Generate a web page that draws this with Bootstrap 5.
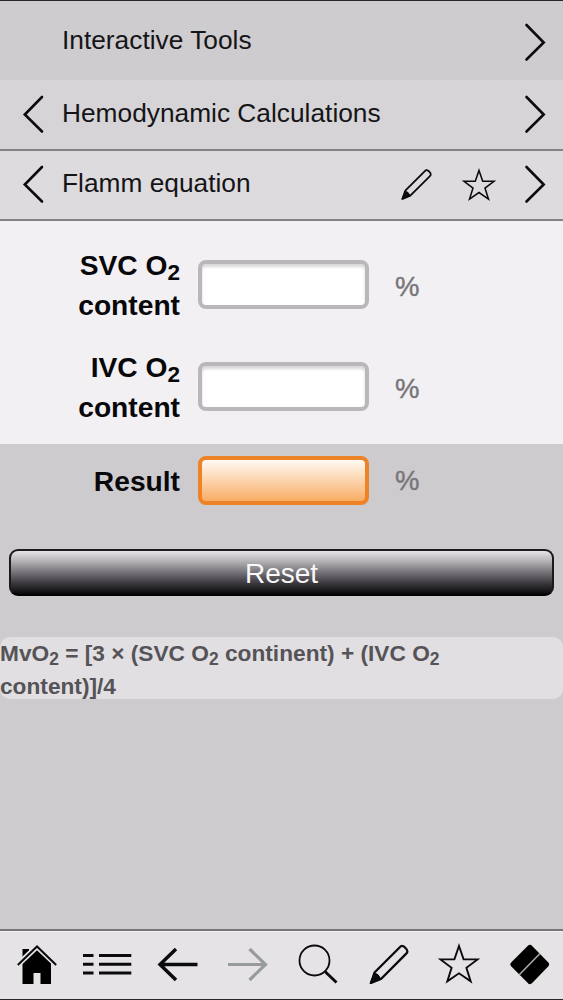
<!DOCTYPE html>
<html lang="en">
<head>
<meta charset="utf-8">
<meta name="viewport" content="width=device-width, initial-scale=1">
<title>Flamm equation</title>
<link rel="stylesheet" href="https://cdn.jsdelivr.net/npm/bootstrap@5.3.0/dist/css/bootstrap.min.css">
<style>
body { font-family: "Liberation Sans", Arial, sans-serif; color: #111; background: #cdcbce; line-height: 1; overflow: hidden; }
svg { display: block; flex: none; fill: none; stroke: #0b0b0d; }
.crumb { font-size: 26.3px; padding: 0 16px 2px 20px; color: #151417; }
.crumb .title { margin-left: 16px; }
.crumb-1 { height: 80px; border-top: 1px solid #2b252d; background: #cecccf; padding-top: 5px; }
.crumb-2 { height: 71px; border-bottom: 2px solid #858287; background: #d6d4d7; }
.crumb-3 { height: 70px; border-bottom: 2px solid #858287; background: #dddbde; }
.crumb a { color: inherit; text-decoration: none; padding-bottom: 1px; }
.crumb-1 a { padding-bottom: 4px; }
.inputs { height: 223px; padding-top: 13px; background: #f2f0f3; }
.entry { height: 102px; }
.entry label { width: 180px; font-weight: 700; font-size: 28.2px; line-height: 40px; color: #08080a; text-align: right; }
.entry sub, .formula sub { font-size: .8em; line-height: 0; bottom: -.23em; }
.entry input.form-control { width: 171px; height: 49px; margin: 0 0 2px 18px; border: 4px solid #b9b7ba; border-radius: 8px; box-shadow: inset 0 3px 3px #d8d8da; background: #fff; }
.entry .unit { margin: 4px 0 0 26px; font-size: 27.5px; color: #777579; -webkit-text-stroke: .4px #777579; }
.entry.outcome { height: 74px; }
.entry.outcome .unit { margin-top: 0; }
.entry.outcome input.form-control { border-color: #ee8226; box-shadow: none; background: linear-gradient(#fffaf5, #f9ad64); }
.btn.reset { width: 545px; height: 47px; margin: 31px auto 0 9px; padding: 0; font-size: 28px; line-height: 45px; color: #f8f8fa; border: 2px solid #1d1a1f; border-bottom-color: #000; border-radius: 9px; background: linear-gradient(#f0eef1 0, #b9b7ba 24%, #747276 50%, #353337 75%, #000 100%); background-origin: border-box; }
.formula { height: 62px; margin-top: 41px; border-radius: 10px; background: #e1dfe2; color: #555357; font-size: 22.7px; line-height: 32.5px; font-weight: 700; }
.formula sub { font-size: .77em; }
.toolbar { height: 71px; border-top: 2px solid #77757a; border-bottom: 1px solid #29252b; background: #e5e3e6; box-shadow: inset 0 1px #f1eff2; }
.crumb .edit { margin-right: 30px; }
.crumb .favorite { margin: 2px 25px 0 0; }
</style>
</head>
<body class="vh-100 d-flex flex-column">
<svg width="0" height="0" class="position-absolute" aria-hidden="true">
  <defs>
    <symbol id="prev" viewBox="0 0 26 40"><path d="M22 3 4.800 20.500 22 37.500" stroke-width="2.600" stroke-linecap="round"/></symbol>
    <symbol id="next" viewBox="0 0 26 40"><path d="M5.500 3 22.700 20.500 5.500 37.500" stroke-width="2.600" stroke-linecap="round"/></symbol>
    <symbol id="pencil" viewBox="0 0 40 40"><path d="M2 38.500 5.500 28 30.800 2.700Q33-.2 36.500 3.500 40 7 37 9.400L12 34.500Z" stroke-width="2.300" stroke-linejoin="round"/><path d="M1 39 5.300 28.500Q9.500 29 11.800 34.500Z" fill="#0b0b0d" stroke="#0b0b0d"/></symbol>
    <symbol id="star" viewBox="0 0 42 42"><path d="M21 3 25.600 16.400H39.500L28.400 24.800 32.700 38.400 21 30.300 9.300 38.400 13.600 24.800 2.500 16.400H16.400Z" stroke-width="1.900"/></symbol>
  </defs>
</svg>

<nav>
  <div class="crumb crumb-1 d-flex align-items-center">
    <svg width="26" height="40"></svg>
    <a class="title flex-grow-1" href="#">Interactive Tools</a>
    <svg width="26" height="40"><use href="#next"/></svg>
  </div>
  <div class="crumb crumb-2 d-flex align-items-center">
    <svg width="26" height="40"><use href="#prev"/></svg>
    <a class="title flex-grow-1" href="#">Hemodynamic Calculations</a>
    <svg width="26" height="40"><use href="#next"/></svg>
  </div>
  <div class="crumb crumb-3 d-flex align-items-center">
    <svg width="26" height="40"><use href="#prev"/></svg>
    <a class="title flex-grow-1" href="#">Flamm equation</a>
    <svg class="edit" width="31" height="31"><use href="#pencil"/></svg>
    <svg class="favorite" width="34" height="34"><use href="#star"/></svg>
    <svg width="26" height="40"><use href="#next"/></svg>
  </div>
</nav>

<main class="d-flex flex-column flex-grow-1">
  <section class="inputs">
    <div class="entry d-flex align-items-center">
      <label for="svc">SVC O<sub>2</sub><br>content</label>
      <input id="svc" class="form-control" type="text">
      <span class="unit">%</span>
    </div>
    <div class="entry d-flex align-items-center">
      <label for="ivc">IVC O<sub>2</sub><br>content</label>
      <input id="ivc" class="form-control" type="text">
      <span class="unit">%</span>
    </div>
  </section>
  <div class="entry outcome d-flex align-items-center">
    <label for="result">Result</label>
    <input id="result" class="form-control" type="text" readonly>
    <span class="unit">%</span>
  </div>
  <button class="btn reset" type="reset">Reset</button>
  <div class="formula">MvO<sub>2</sub> = [3 × (SVC O<sub>2</sub> continent) + (IVC O<sub>2</sub><br>content)]/4</div>
</main>

<footer class="toolbar d-flex align-items-center">
  <svg width="563" height="68" viewBox="0 931 563 68">
    <path d="M22.500 949H29V953L36.500 948 51 960V984H40.500V973H33.500V984H22.500Z" fill="#000" stroke="none"/>
    <path d="M17.500 965 37 946.500 56.500 965" stroke="#e5e3e6" stroke-width="5.500"/>
    <path d="M17.800 965 37 946.500 56.200 965" stroke-width="2"/>
    <path d="M83 955.500H93.500M83 964.200H93.500M83 973H93.500M99 955.500H131.300M99 964.200H131.300M99 973H131.300" stroke-width="3"/>
    <path d="M176 949 160 964.500 176 980M160 964.500H197.500" stroke-width="3.500"/>
    <path d="M249.500 949 265.500 964.500 249.500 980M265.500 964.500H228" stroke="#989b9c" stroke-width="3.200"/>
    <circle cx="314.500" cy="960.500" r="15" stroke-width="1.800"/><path d="M325 971.500 336.500 982.500" stroke-width="3"/>
    <use href="#pencil" x="369" y="944.500" width="40" height="40"/>
    <use href="#star" x="438" y="943" width="42" height="42"/>
    <path d="M530 948 546 964.300 530 981 513.500 964.300Z" fill="#000" stroke="#000" stroke-width="6" stroke-linejoin="round"/>
    <path d="M519 975 540 953.500" stroke="#aaa8ac" stroke-width="1.600"/>
  </svg>
</footer>
<script src="https://cdn.jsdelivr.net/npm/bootstrap@5.3.0/dist/js/bootstrap.bundle.min.js"></script>
</body>
</html>
